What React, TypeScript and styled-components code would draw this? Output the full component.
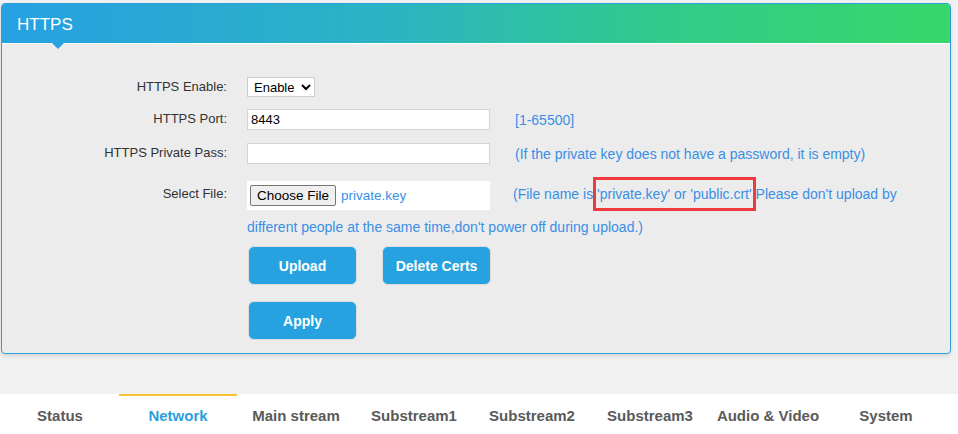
import styled, { createGlobalStyle } from "styled-components";

const GlobalStyle = createGlobalStyle`
  html, body {
    margin: 0;
    padding: 0;
    background: #f1f1f1;
    font-family: "Liberation Sans", Arial, sans-serif;
  }
`;

const Page = styled.div`
  width: 958px;
  height: 434px;
  overflow: hidden;
  background: #f1f1f1;
  padding-top: 3px;
  box-sizing: border-box;
`;

const Panel = styled.div`
  margin-left: 1px;
  width: 950px;
  box-sizing: border-box;
  border: 1px solid #2e9fdd;
  border-radius: 4px;
  background: #ececec;
  box-shadow: 0 2px 4px rgba(0, 0, 0, 0.12);
  overflow: hidden;
`;

const Header = styled.div`
  position: relative;
  height: 39px;
  border-bottom: 1px solid #fff;
  background: linear-gradient(to right, #26a1e2 0%, #2bb3c4 40%, #31cb8a 70%, #36d86a 100%);
  color: #fff;
  font-size: 17px;
  line-height: 42px;
  padding-left: 15px;

  &::after {
    content: "";
    position: absolute;
    left: 50px;
    bottom: -6px;
    border-left: 6px solid transparent;
    border-right: 6px solid transparent;
    border-top: 6px solid #27a3df;
  }
`;

const Body = styled.div`
  padding: 0 0 13px 0;
`;

const Row = styled.div<{ $mt: number; $lh?: number }>`
  display: flex;
  align-items: flex-start;
  margin-top: ${(p) => p.$mt}px;
  font-size: 13px;
  line-height: ${(p) => p.$lh ?? 20}px;
`;

const Label = styled.div`
  width: 225px;
  flex: none;
  text-align: right;
  color: #333;
  margin-right: 20px;
`;

const Field = styled.div`
  flex: 1;
  display: flex;
  align-items: center;
`;

const WrapField = styled.div`
  flex: 1;
  padding-right: 20px;
  line-height: 32px;
`;

const Select = styled.select`
  height: 20px;
  width: 68px;
  font-family: "Liberation Sans", Arial, sans-serif;
  font-size: 13px;
  border: 1px solid #ccc;
  background: #fff;
  color: #000;
  padding: 0 2px;
  margin: 0;
`;

const TextInput = styled.input`
  width: 243px;
  height: 21px;
  box-sizing: border-box;
  border: 1px solid #d4d4d4;
  background: #fff;
  font-family: "Liberation Sans", Arial, sans-serif;
  font-size: 13px;
  padding: 0 3px;
  margin: 0;
  color: #000;
  outline: none;
`;

const Hint = styled.span<{ $ml?: number }>`
  color: #3a8fe6;
  font-size: 14px;
  margin-left: ${(p) => p.$ml ?? 25}px;
`;

const FileBox = styled.span`
  display: inline-flex;
  align-items: center;
  vertical-align: middle;
  width: 243px;
  height: 29px;
  box-sizing: border-box;
  background: #fff;
  padding-left: 3px;
  line-height: normal;
`;

const ChooseButton = styled.span`
  display: inline-block;
  border: 1px solid #767676;
  border-radius: 2px;
  background: #efefef;
  color: #000;
  font-size: 13.5px;
  padding: 1px 6px;
  line-height: 17px;
`;

const FileName = styled.span`
  color: #3a8fe6;
  margin-left: 5px;
  font-size: 13.5px;
`;

const Marked = styled.span`
  position: relative;

  &::before {
    content: "";
    position: absolute;
    left: -4px;
    right: -4px;
    top: -9px;
    bottom: -9px;
    border: 3px solid #f03a3e;
    pointer-events: none;
  }
`;

const Buttons = styled.div<{ $mt: number }>`
  display: flex;
  gap: 25px;
  margin-top: ${(p) => p.$mt}px;
  padding-left: 246px;
`;

const Button = styled.button`
  width: 109px;
  height: 39px;
  box-sizing: border-box;
  border: 1px solid #dcdcdc;
  border-radius: 6px;
  background: #27a2e0;
  color: #fff;
  font-family: "Liberation Sans", Arial, sans-serif;
  font-weight: bold;
  font-size: 14px;
  cursor: pointer;
  padding: 0;
`;

const Tabs = styled.div`
  display: flex;
  margin-top: 40px;
  background: #fff;
  height: 44px;
  padding-left: 1px;
`;

const Tab = styled.div<{ $active?: boolean }>`
  width: 118px;
  text-align: center;
  border-top: 2px solid ${(p) => (p.$active ? "#f7c22d" : "transparent")};
  line-height: 40px;
  font-size: 15px;
  font-weight: bold;
  color: ${(p) => (p.$active ? "#2a9fe0" : "#5a5a5a")};
  white-space: nowrap;
`;

const tabs = [
  "Status",
  "Network",
  "Main stream",
  "Substream1",
  "Substream2",
  "Substream3",
  "Audio & Video",
  "System",
];

export default function App() {
  return (
    <>
      <GlobalStyle />
      <Page>
        <Panel>
          <Header>HTTPS</Header>
          <Body>
            <Row $mt={33}>
              <Label>HTTPS Enable:</Label>
              <Field>
                <Select defaultValue="1">
                  <option value="1">Enable</option>
                  <option value="0">Disable</option>
                </Select>
              </Field>
            </Row>
            <Row $mt={12}>
              <Label>HTTPS Port:</Label>
              <Field>
                <TextInput defaultValue="8443" />
                <Hint>[1-65500]</Hint>
              </Field>
            </Row>
            <Row $mt={13}>
              <Label>HTTPS Private Pass:</Label>
              <Field>
                <TextInput type="password" />
                <Hint>(If the private key does not have a password, it is empty)</Hint>
              </Field>
            </Row>
            <Row $mt={14} $lh={32}>
              <Label>Select File:</Label>
              <WrapField>
                <FileBox>
                  <ChooseButton>Choose File</ChooseButton>
                  <FileName>private.key</FileName>
                </FileBox>
                <Hint $ml={23}>
                  (File name is <Marked>'private.key' or 'public.crt'</Marked>.Please don't
                  upload by different people at the same time,don't power off during upload.)
                </Hint>
              </WrapField>
            </Row>
            <Buttons $mt={2}>
              <Button>Upload</Button>
              <Button>Delete Certs</Button>
            </Buttons>
            <Buttons $mt={16}>
              <Button>Apply</Button>
            </Buttons>
          </Body>
        </Panel>
        <Tabs>
          {tabs.map((t) => (
            <Tab key={t} $active={t === "Network"}>
              {t}
            </Tab>
          ))}
        </Tabs>
      </Page>
    </>
  );
}
